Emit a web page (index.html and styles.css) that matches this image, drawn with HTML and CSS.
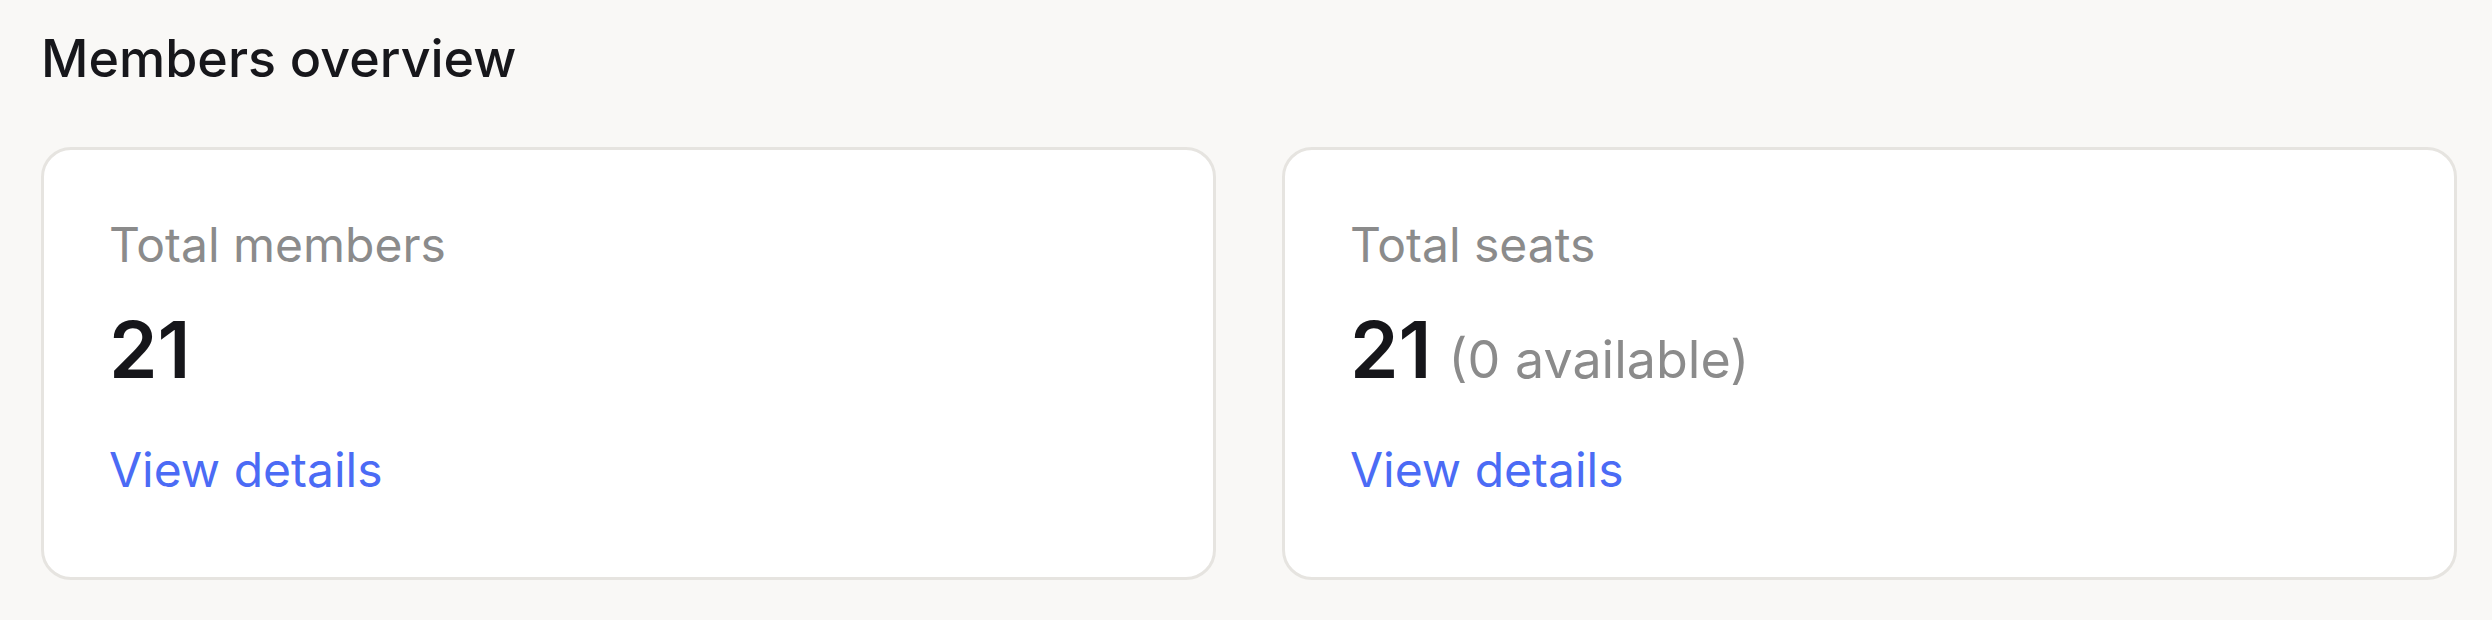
FILE: index.html
```html
<!DOCTYPE html>
<html lang="en">
<head>
<meta charset="utf-8">
<title>Members overview</title>
<link rel="stylesheet" href="styles.css">
</head>
<body>
<main class="page">
  <h1 class="title">Members overview</h1>
  <section class="cards">
    <div class="card">
      <div class="label">Total members</div>
      <div class="value"><span class="num">21</span></div>
      <a class="link" href="#">View details</a>
    </div>
    <div class="card">
      <div class="label">Total seats</div>
      <div class="value"><span class="num">21</span><span class="sub">(0 available)</span></div>
      <a class="link" href="#">View details</a>
    </div>
  </section>
</main>
</body>
</html>
```
FILE: styles.css
```css
* { box-sizing: border-box; }
html, body {
  margin: 0;
  padding: 0;
  background: #f9f8f6;
  font-family: Inter, "Noto Sans", sans-serif;
}
.page {
  padding: 28px 35px 0 41px;
}
.title {
  margin: 0;
  font-size: 52px;
  line-height: 62px;
  font-weight: 500;
  color: #17171b;
}
.cards {
  margin-top: 57px;
  display: grid;
  grid-template-columns: 1fr 1fr;
  gap: 66px;
}
.card {
  background: #ffffff;
  border: 3px solid #e6e4e0;
  border-radius: 30px;
  height: 433px;
  padding: 66px 66px 0 65px;
  display: flex;
  flex-direction: column;
  align-items: flex-start;
}
.label {
  font-size: 48px;
  line-height: 58px;
  color: #8b8b8b;
}
.value {
  margin-top: 29px;
  display: flex;
  align-items: baseline;
  height: 94px;
  line-height: 94px;
}
.num {
  font-size: 78px;
  font-weight: 600;
  color: #16161a;
}
.sub {
  margin-left: 17px;
  font-size: 52px;
  line-height: 1;
  color: #8b8b8b;
}
.link {
  margin-top: 44px;
  font-size: 48px;
  line-height: 58px;
  color: #4b6bf5;
  text-decoration: none;
}
```
